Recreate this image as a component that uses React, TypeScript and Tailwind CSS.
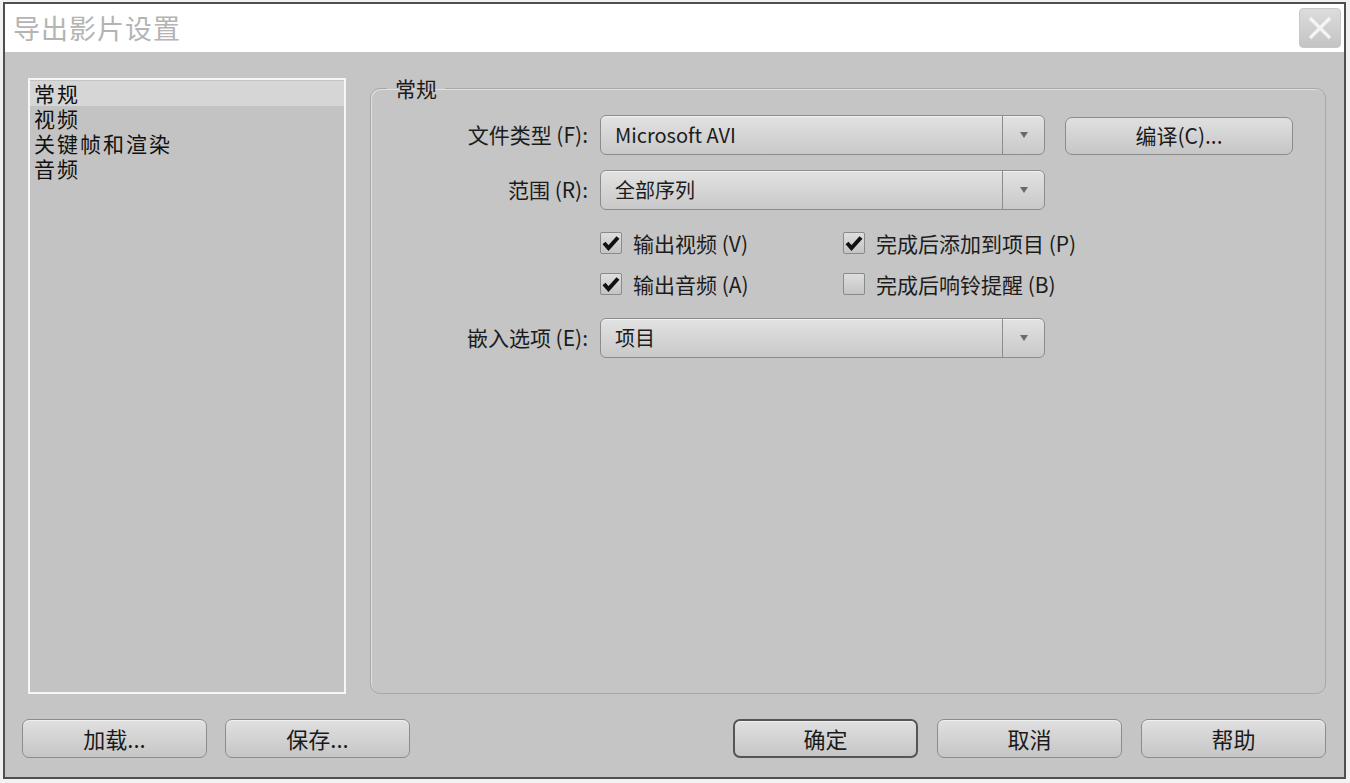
import React from "react"

const font = { fontFamily: '"Noto Sans CJK SC", "Liberation Sans", sans-serif' }

const Select = ({ value }: { value: string }) => {
    return (
        <div className="flex h-[40px] w-[445px] items-stretch rounded-[6px] border border-[#8c8c8c] bg-gradient-to-b from-[#e2e2e2] to-[#c9c9c9] shadow-[inset_0_1px_0_#f2f2f2]">
            <div className="flex flex-1 items-center pl-[14px] text-[20px] text-[#1c1c1c]">{value}</div>
            <div className="flex w-[42px] items-center justify-center border-l border-[#8c8c8c]">
                <svg width="10" height="8" viewBox="0 0 10 8"><path d="M1 1 L9 1 L5 7 Z" fill="#6a6a6a" /></svg>
            </div>
        </div>
    )
}

const Check = ({ on, label }: { on: boolean, label: string }) => {
    return (
        <div className="flex h-[22px] items-center gap-[11px]">
            <div className="flex h-[22px] w-[22px] items-center justify-center rounded-[2px] border border-[#8a8a8a] bg-gradient-to-b from-[#dedede] to-[#c4c4c4]">
                {on && (
                    <svg width="18" height="16" viewBox="0 0 18 16">
                        <path d="M2 8 L6.5 13 L16 2.5" stroke="#111" strokeWidth="4" fill="none" strokeLinejoin="miter" />
                    </svg>
                )}
            </div>
            <span className="text-[21px] leading-[22px] text-[#1c1c1c]">{label}</span>
        </div>
    )
}

const Btn = ({ label, main }: { label: string, main?: boolean }) => {
    return (
        <button className={"h-[39px] w-[185px] rounded-[7px] bg-gradient-to-b from-[#e0e0e0] to-[#c6c6c6] text-[22px] text-[#1a1a1a] shadow-[inset_0_1px_0_#f0f0f0] " + (main ? "border-2 border-[#555555]" : "border border-[#8c8c8c]")}>
            {label}
        </button>
    )
}

const App = () => {
    const items = ["常规", "视频", "关键帧和渲染", "音频"]

    return (
        <div className="h-[783px] w-[1350px] overflow-hidden bg-[#f2f2f2] pl-[3px] pt-[2px]" style={font}>
            <div className="flex h-[777px] w-[1343px] flex-col border-2 border-[#4f4f4f] bg-[#c5c5c5]">
                {/* title bar */}
                <div className="flex h-[48px] items-center justify-between bg-white pl-[8px] pr-[3px]">
                    <span className="text-[27px] tracking-[1px] text-[#b4b4b4]">导出影片设置</span>
                    <div className="flex h-[40px] w-[42px] items-center justify-center rounded-[4px] border border-[#c8c8c8] bg-gradient-to-b from-[#dcdcdc] to-[#c4c4c4]">
                        <svg width="26" height="26" viewBox="0 0 26 26"><path d="M3 3 L23 23 M23 3 L3 23" stroke="#f4f4f4" strokeWidth="3.2" /></svg>
                    </div>
                </div>

                <div className="flex flex-1 flex-col px-[18px] pb-[19px] pl-[17px] pt-[26px]">
                    <div className="flex flex-1 items-stretch gap-[24px] pl-[6px]">
                        <div className="w-[318px] border-2 border-[#f6f6f6] bg-[#c3c3c3] pt-[1px]">
                            {items.map((it, i) => (
                                <div key={it} className={"h-[25px] pl-[4px] text-[21px] leading-[25px] tracking-[2px] text-[#111] " + (i === 0 ? "bg-[#d6d6d6]" : "")}>
                                    {it}
                                </div>
                            ))}
                        </div>

                        <fieldset className="mt-[-2px] flex-1 rounded-[10px] border border-[#a8a8a8] shadow-[inset_1px_1px_0_#e0e0e0]">
                            <legend className="ml-[16px] px-[8px] text-[21px] leading-[24px] text-[#1c1c1c]">常规</legend>
                            <div className="flex flex-col pt-[15px]">
                                <div className="flex items-center">
                                    <div className="w-[229px] pr-[12px] text-right text-[21px] text-[#1c1c1c]">文件类型 (F):</div>
                                    <Select value="Microsoft AVI" />
                                    <button className="ml-[20px] mt-[2px] h-[38px] w-[228px] rounded-[7px] border border-[#8c8c8c] bg-gradient-to-b from-[#e0e0e0] to-[#c6c6c6] text-[21px] text-[#1a1a1a]">
                                        编译(C)...
                                    </button>
                                </div>
                                <div className="mt-[15px] flex items-center">
                                    <div className="w-[229px] pr-[12px] text-right text-[21px] text-[#1c1c1c]">范围 (R):</div>
                                    <Select value="全部序列" />
                                </div>
                                <div className="ml-[229px] mt-[22px] grid w-[520px] grid-cols-[243px_1fr] gap-y-[19px]">
                                    <Check on label="输出视频 (V)" />
                                    <Check on label="完成后添加到项目 (P)" />
                                    <Check on label="输出音频 (A)" />
                                    <Check on={false} label="完成后响铃提醒 (B)" />
                                </div>
                                <div className="mt-[23px] flex items-center">
                                    <div className="w-[229px] pr-[12px] text-right text-[21px] text-[#1c1c1c]">嵌入选项 (E):</div>
                                    <Select value="项目" />
                                </div>
                            </div>
                        </fieldset>
                    </div>

                    <div className="mt-[25px] flex items-center">
                        <div className="flex gap-[18px]">
                            <Btn label="加载..." />
                            <Btn label="保存..." />
                        </div>
                        <div className="ml-auto flex gap-[19px]">
                            <Btn label="确定" main />
                            <Btn label="取消" />
                            <Btn label="帮助" />
                        </div>
                    </div>
                </div>
            </div>
        </div>
    )
}

export default App
